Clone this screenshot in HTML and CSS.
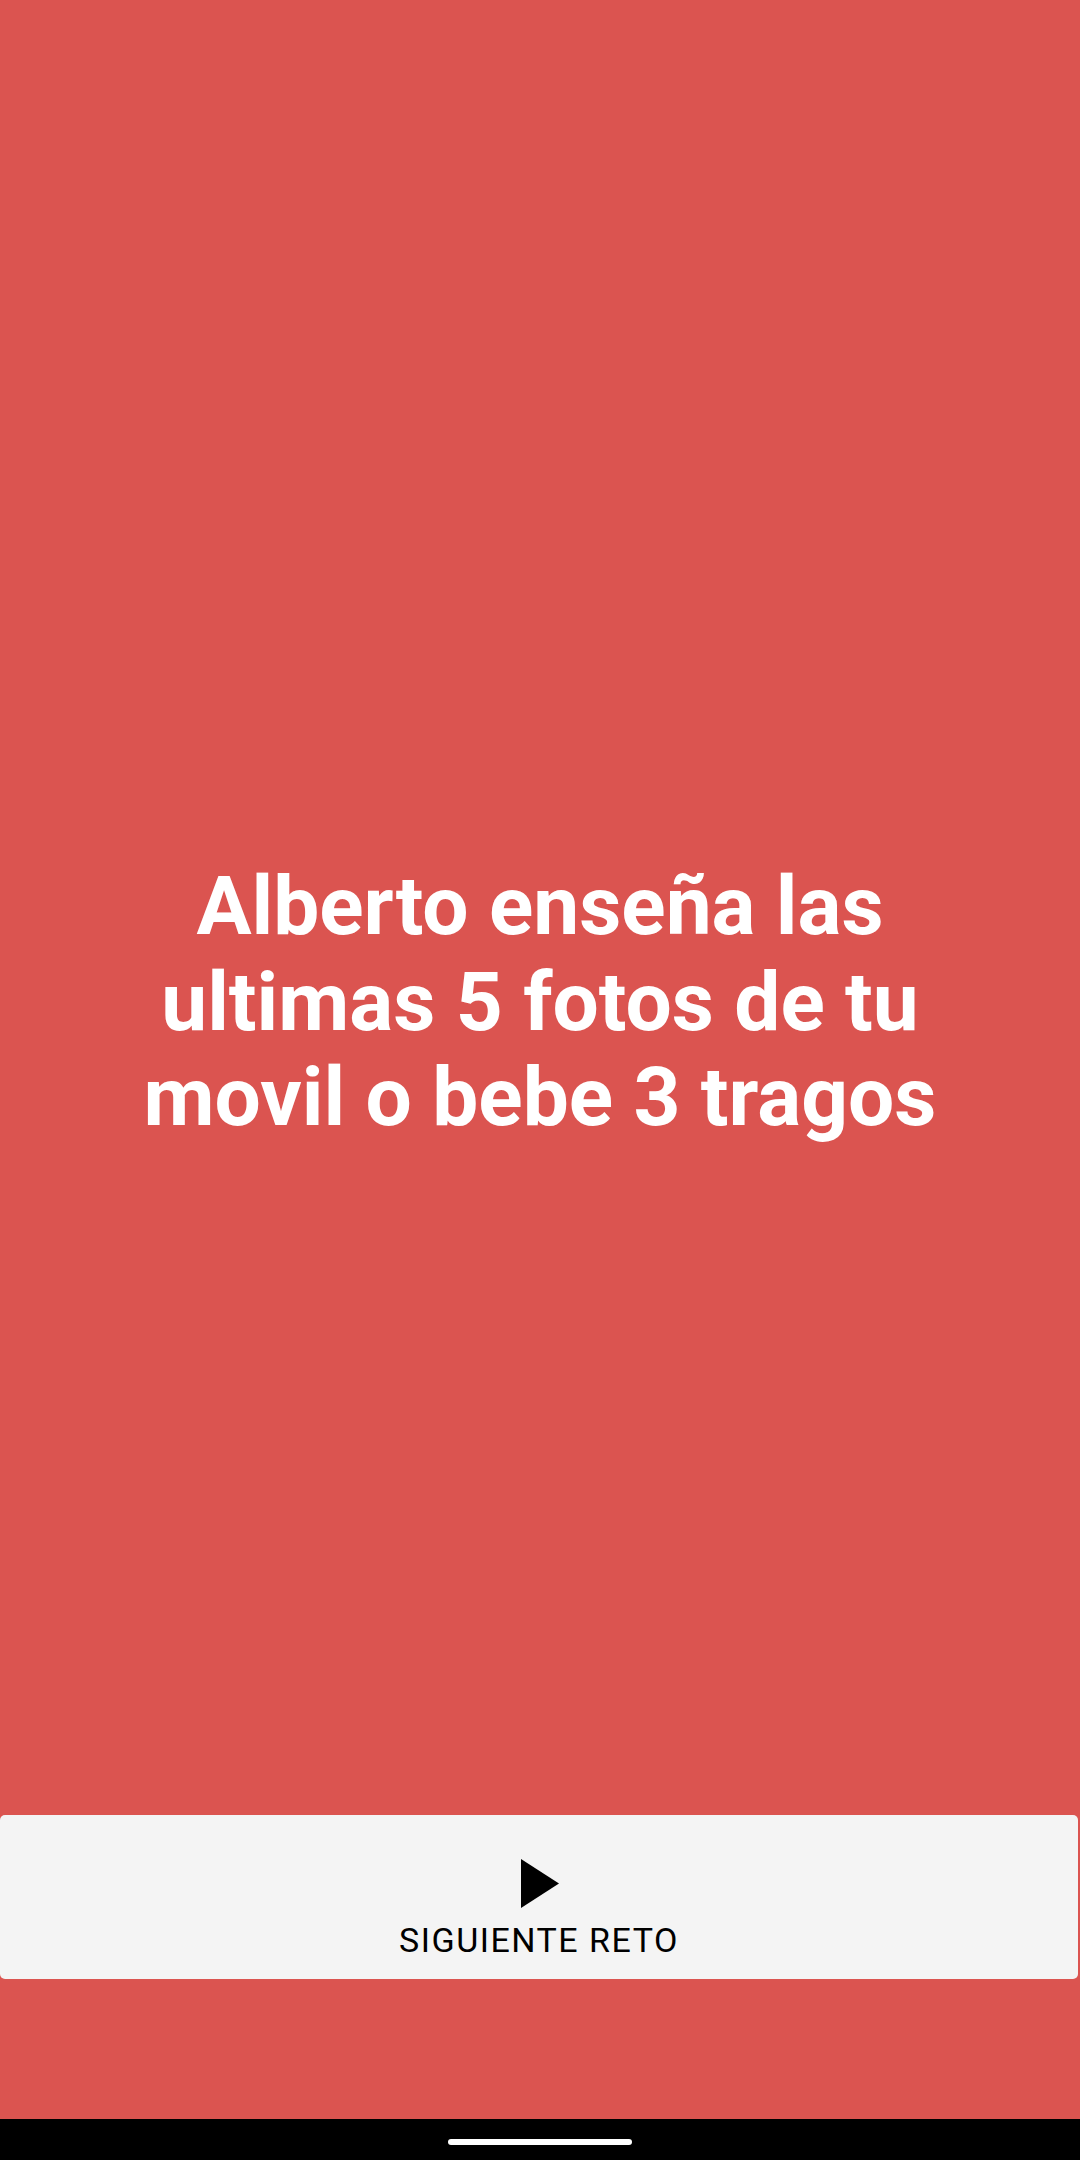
FILE: index.html
```html
<!DOCTYPE html>
<html lang="es">
<head>
<meta charset="utf-8">
<title>Reto</title>
<link rel="stylesheet" href="styles.css">
</head>
<body>
<div class="screen">
  <div class="content">
    <p class="challenge">Alberto enseña las ultimas 5 fotos de tu movil o bebe 3 tragos</p>
  </div>
  <button class="next-btn" type="button">
    <svg class="play" width="38" height="49" viewBox="0 0 38 49"><polygon points="0,0 38,24.5 0,49" fill="#000"/></svg>
    <span class="label">SIGUIENTE RETO</span>
  </button>
  <div class="spacer"></div>
  <div class="navbar"><div class="home-indicator"></div></div>
</div>
</body>
</html>
```
FILE: styles.css
```css
html, body {
  margin: 0;
  padding: 0;
}
body {
  width: 1080px;
  height: 2160px;
  background: #db5450;
  font-family: Roboto, "Noto Sans", sans-serif;
  overflow: hidden;
}
.screen {
  display: flex;
  flex-direction: column;
  width: 1080px;
  height: 2160px;
}
.content {
  height: 1815px;
  box-sizing: border-box;
  padding: 859px 110px 0;
  flex: none;
}
.challenge {
  margin: 0;
  color: #ffffff;
  font-weight: 700;
  font-size: 82px;
  line-height: 95.5px;
  text-align: center;
}
.next-btn {
  flex: none;
  height: 164px;
  width: 1078px;
  margin: 0;
  border: none;
  border-radius: 5px;
  background: #f4f4f4;
  display: flex;
  flex-direction: column;
  align-items: center;
  padding: 44px 0 0;
  box-sizing: border-box;
  font-family: Roboto, "Noto Sans", sans-serif;
}
.play {
  display: block;
  margin-left: 1px;
}
.label {
  display: block;
  margin-top: 12px;
  font-size: 34px;
  line-height: 40px;
  color: #000;
  letter-spacing: 1.5px;
}
.spacer {
  flex: 1;
}
.navbar {
  flex: none;
  height: 41px;
  background: #000;
  display: flex;
  justify-content: center;
  padding-top: 20px;
  box-sizing: border-box;
}
.home-indicator {
  width: 184px;
  height: 6px;
  border-radius: 3px;
  background: #fff;
}
```
